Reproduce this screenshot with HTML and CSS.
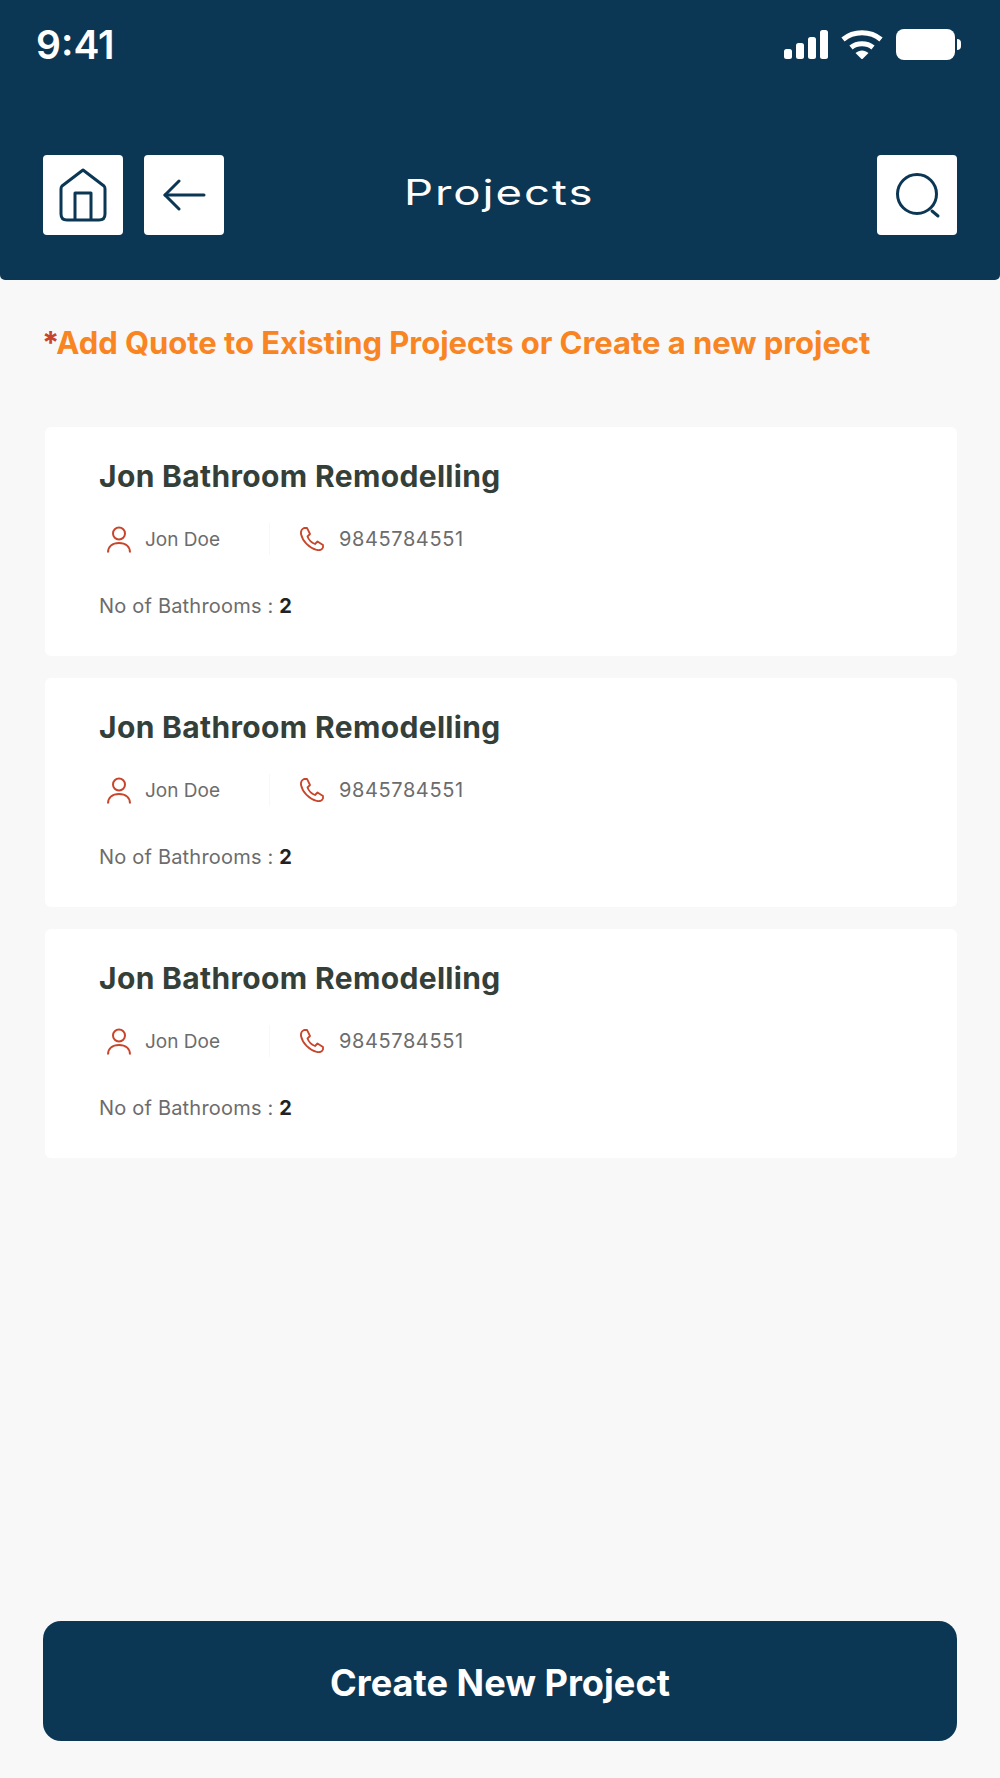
FILE: index.html
```html
<!DOCTYPE html>
<html>
<head>
	<meta charset="utf-8">
	<meta name="viewport" content="width=device-width, initial-scale=1">
	<title>Projects</title>
	<link rel="stylesheet" href="styles.css">
</head>
<body>
	<header class="top">
		<div class="status">
			<span class="time">9:41</span>
			<div class="status-icons">
				<div class="signal"><i class="s1"></i><i class="s2"></i><i class="s3"></i><i class="s4"></i></div>
				<svg class="wifi" width="42" height="30" viewBox="0 0 42 30"><path d="M2 10.500C12.500 1.500 29.500 1.500 40 10.500" fill="none" stroke="#fff" stroke-width="5"/><path d="M10 18.500C16 13.500 26 13.500 32 18.500" fill="none" stroke="#fff" stroke-width="5"/><path d="M14.500 24C18.500 20.500 23.500 20.500 27.500 24L21 30.500Z" fill="#fff"/></svg>
				<div class="battery"><div class="cell"></div><div class="nub"></div></div>
			</div>
		</div>
		<div class="nav">
			<button class="sq">
				<svg width="48" height="54" viewBox="0 0 48 54" fill="none" stroke="#0b3754" stroke-width="3" stroke-linejoin="round"><path d="M24 2 L45 18 Q46 19 46 21 V46 Q46 52 40 52 H8 Q2 52 2 46 V21 Q2 19 3 18 Z"/><path d="M16 52 V25 H32 V52"/></svg>
			</button>
			<button class="sq">
				<svg width="44" height="32" viewBox="0 0 44 32" fill="none" stroke="#0b3754" stroke-width="3" stroke-linecap="round" stroke-linejoin="round"><path d="M3 16 H42"/><path d="M17 2 L3 16 L17 30"/></svg>
			</button>
			<h1><span>Projects</span></h1>
			<button class="sq">
				<svg width="48" height="48" viewBox="0 0 48 48" fill="none" stroke="#0b3754" stroke-linecap="round"><circle cx="24" cy="23" r="19.500" stroke-width="3"/><path d="M39 40 L45 45" stroke-width="3"/></svg>
			</button>
		</div>
	</header>

	<main class="content">
		<p class="note"><span class="star">*</span>Add Quote to Existing Projects or Create a new project</p>

		<div class="list">
			<div class="card">
				<h2>Jon Bathroom Remodelling</h2>
				<div class="meta">
					<div class="who">
						<svg width="24" height="27" viewBox="0 0 24 27" fill="none" stroke="#c8452b" stroke-width="2"><circle cx="12" cy="7.500" r="6"/><path d="M1 26.500C1 20.500 5.500 17 12 17S23 20.500 23 26.500"/></svg>
						<span>Jon Doe</span>
					</div>
					<div class="phone">
						<svg width="24" height="24" viewBox="0 0 24 24" fill="none" stroke="#c8452b" stroke-width="1.800" stroke-linejoin="round"><path d="M4 1 L7 0.900 L10 7 L7.500 9.500 C9 13.500 11 15.500 15 17 L17.500 14.500 L23 18 V20.500 C22 23 19.500 23.500 17 23 C9 21 2.500 14 1 7 C0.700 4.500 1.500 2 4 1 Z"/></svg>
						<span>9845784551</span>
					</div>
				</div>
				<p class="count">No of Bathrooms : <b>2</b></p>
			</div>
			<div class="card">
				<h2>Jon Bathroom Remodelling</h2>
				<div class="meta">
					<div class="who">
						<svg width="24" height="27" viewBox="0 0 24 27" fill="none" stroke="#c8452b" stroke-width="2"><circle cx="12" cy="7.500" r="6"/><path d="M1 26.500C1 20.500 5.500 17 12 17S23 20.500 23 26.500"/></svg>
						<span>Jon Doe</span>
					</div>
					<div class="phone">
						<svg width="24" height="24" viewBox="0 0 24 24" fill="none" stroke="#c8452b" stroke-width="1.800" stroke-linejoin="round"><path d="M4 1 L7 0.900 L10 7 L7.500 9.500 C9 13.500 11 15.500 15 17 L17.500 14.500 L23 18 V20.500 C22 23 19.500 23.500 17 23 C9 21 2.500 14 1 7 C0.700 4.500 1.500 2 4 1 Z"/></svg>
						<span>9845784551</span>
					</div>
				</div>
				<p class="count">No of Bathrooms : <b>2</b></p>
			</div>
			<div class="card">
				<h2>Jon Bathroom Remodelling</h2>
				<div class="meta">
					<div class="who">
						<svg width="24" height="27" viewBox="0 0 24 27" fill="none" stroke="#c8452b" stroke-width="2"><circle cx="12" cy="7.500" r="6"/><path d="M1 26.500C1 20.500 5.500 17 12 17S23 20.500 23 26.500"/></svg>
						<span>Jon Doe</span>
					</div>
					<div class="phone">
						<svg width="24" height="24" viewBox="0 0 24 24" fill="none" stroke="#c8452b" stroke-width="1.800" stroke-linejoin="round"><path d="M4 1 L7 0.900 L10 7 L7.500 9.500 C9 13.500 11 15.500 15 17 L17.500 14.500 L23 18 V20.500 C22 23 19.500 23.500 17 23 C9 21 2.500 14 1 7 C0.700 4.500 1.500 2 4 1 Z"/></svg>
						<span>9845784551</span>
					</div>
				</div>
				<p class="count">No of Bathrooms : <b>2</b></p>
			</div>
		</div>

		<button class="create">Create New Project</button>
	</main>
</body>
</html>
```

FILE: styles.css
```css
*{box-sizing: border-box;}
html,body{margin: 0;height: 100%;}
body{background: #f8f8f8;font-family: "Inter", sans-serif;display: flex;flex-direction: column;height: 1778px;overflow: hidden;}
button{border: none;padding: 0;font-family: inherit;cursor: pointer;}

.top{height: 280px;background: #0b3754;border-radius: 0 0 5px 5px;padding: 0 43px 0 36px;}
.status{height: 155px;display: flex;justify-content: space-between;align-items: flex-start;padding-top: 26px;margin-right: -4px;}
.time{color: #fff;font-size: 39px;font-weight: 600;line-height: 38px;}
.status-icons{display: flex;align-items: center;gap: 13px;height: 30px;margin-top: 3px;}
.signal{display: flex;align-items: flex-end;gap: 4px;height: 29px;}
.signal i{display: block;width: 8px;background: #fff;border-radius: 2.500px;}
.s1{height: 10px;}
.s2{height: 16px;}
.s3{height: 22px;}
.s4{height: 29px;}
.battery{display: flex;align-items: center;gap: 2px;}
.cell{width: 59px;height: 31px;background: #fff;border-radius: 8px;}
.nub{width: 4px;height: 11px;background: #fff;border-radius: 0 6px 6px 0;}

.nav{display: flex;align-items: center;padding-left: 7px;}
.sq{width: 80px;height: 80px;background: #fff;border-radius: 4px;display: flex;align-items: center;justify-content: center;flex: none;}
.sq + .sq{margin-left: 21px;}
h1{flex: 1;margin: 0;text-align: center;color: #fff;font-size: 35px;font-weight: 400;letter-spacing: 1.500px;padding: 0 102px 6px 0;}
h1 span{display: inline-block;transform: scaleX(1.300);}

.content{flex: 1;display: flex;flex-direction: column;padding: 0 43px 37px;}
.note{margin: 45px 0 0 -1px;color: #f98422;font-size: 31px;font-weight: 700;letter-spacing: -0.050px;line-height: 36px;}
.star{color: #c8452b;}
.list{display: flex;flex-direction: column;gap: 22px;margin: 66px 0 0 2px;}
.card{height: 229px;background: #fff;border-radius: 6px;padding: 29px 54px 0;}
h2{margin: 0;color: #343f3a;font-size: 30px;font-weight: 650;letter-spacing: 0.350px;line-height: 40px;}
.meta{display: flex;margin-top: 27px;height: 32px;align-items: center;color: #6c6c6c;font-size: 20px;}
.who{width: 171px;display: flex;align-items: center;gap: 14px;padding-left: 8px;border-right: 1px solid #f8f8f8;height: 32px;font-size: 19px;}
.phone{display: flex;align-items: center;gap: 15px;padding-left: 30px;letter-spacing: 0.600px;}
.count{margin: 38px 0 0;color: #6c6c6c;font-size: 20px;letter-spacing: 0.200px;line-height: 26px;}
.count b{color: #222;}

.create{margin-top: auto;height: 120px;flex: none;background: #0b3754;color: #fff;border-radius: 18px;font-size: 36.200px;font-weight: 650;padding-top: 3px;}
```
